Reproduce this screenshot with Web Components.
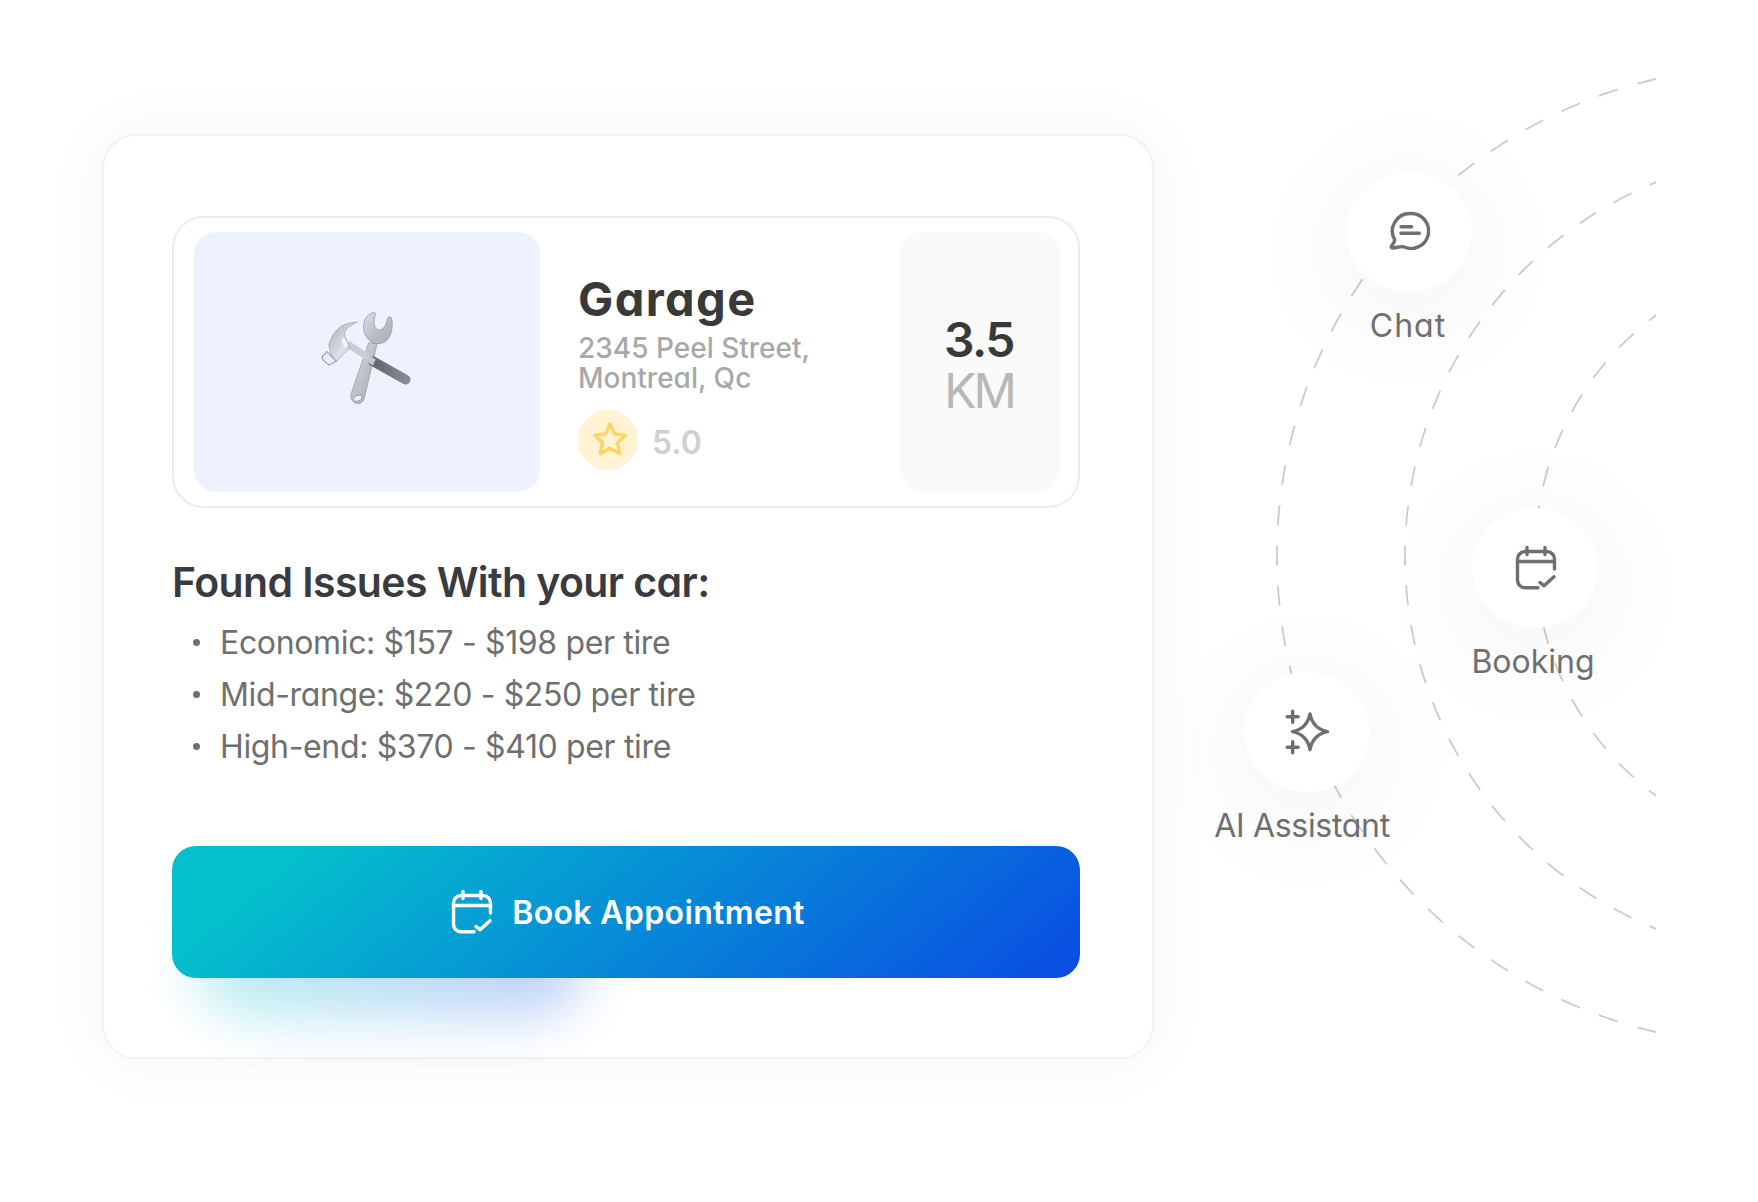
<!DOCTYPE html>
<html lang="en">
<head>
<meta charset="utf-8">
<title>Garage booking</title>
<style>
    html, body { margin: 0; background: #fff; }
    body {
        width: 1758px;
        height: 1202px;
        overflow: hidden;
        font-family: Inter, "Noto Sans", sans-serif;
        font-feature-settings: "cv11" 1;
        color: #393939;
    }
</style>
</head>
<body>
<booking-stage>
    <booking-card>
        <garage-summary distance="3.5" unit="KM" rating="5.0">
            <svg slot="picture" width="94" height="95" viewBox="125 95 275 280" aria-hidden="true">
                <defs>
                    <linearGradient id="steel" x1="0" y1="0" x2="1" y2="1">
                        <stop offset="0" stop-color="#dddee5"/>
                        <stop offset=".55" stop-color="#bcbec7"/>
                        <stop offset="1" stop-color="#a8aab3"/>
                    </linearGradient>
                    <linearGradient id="grip" x1="0" y1="0" x2="1" y2="0">
                        <stop offset="0" stop-color="#5f666e"/>
                        <stop offset="1" stop-color="#858b92"/>
                    </linearGradient>
                    <linearGradient id="head" x1="0" y1="0" x2="1" y2="1">
                        <stop offset="0" stop-color="#a9acb6"/>
                        <stop offset=".6" stop-color="#dfe1e7"/>
                        <stop offset="1" stop-color="#a9acb6"/>
                    </linearGradient>
                    <filter id="soft"><feGaussianBlur stdDeviation="1.300"/></filter>
                </defs>
                <g filter="url(#soft)">
                    <path fill="url(#steel)" stroke="#8e919b" stroke-width="2" d="M268 188 216 338c-8 26 26 44 38 16l38-162z"/>
                    <path fill="url(#steel)" stroke="#8e919b" stroke-width="2" d="M278 100c-23 8-30 35-23 60 10 25 30 35 50 30 25-5 37-40 30-75-5-5-10-3-13 3-2 22-17 37-27 32-13-5-15-25-7-45 0-5-4-6-10-5z"/>
                    <ellipse cx="235" cy="352" rx="13" ry="8" transform="rotate(-20 235 352)" fill="#eef2fe" stroke="#85888f" stroke-width="2"/>
                    <path d="M205 192 275 238" stroke="#c9ccd4" stroke-width="20"/>
                    <path d="M280 243 376 297" stroke="url(#grip)" stroke-width="29" stroke-linecap="round"/>
                    <path d="M270 224 260 244 280 256 288 238z" fill="#c2c5cd"/>
                    <path fill="url(#head)" stroke="#868993" stroke-width="1.500" d="M233 128c-38 0-71 20-83 67l6 27 16 23c13-13 25-30 40-40-7-25-22-40-12-55 10-10 22-16 33-22z"/>
                    <path fill="#f2f3f6" d="M190 172c8 4 14 14 16 26-6 5-12 4-14-2-3-8-5-16-2-24z"/>
                    <path fill="#e6edf8" stroke="#8f96a6" stroke-width="3" d="M145 215 132 228c-3 4-2 8 1 11l10 10c4 4 10 5 15 2l14-8z"/>
                </g>
            </svg>
            <span slot="name">Garage</span>
            <span slot="address">2345 Peel Street,<br>Montreal, Qc</span>
            <svg slot="star" width="38" height="36" viewBox="0 0 38 36" fill="none" stroke="#ffd466" stroke-width="3.400" stroke-linejoin="round" aria-hidden="true">
                <path d="M19 3l4.600 10 10.900 1.300-8 7.500 2.100 10.800L19 27.200 9.400 32.600l2.100-10.800-8-7.500L14.400 13z"/>
            </svg>
        </garage-summary>
        <issue-list title="Found Issues With your car:">
            <li>Economic: $157 - $198 per tire</li>
            <li>Mid-range: $220 - $250 per tire</li>
            <li>High-end: $370 - $410 per tire</li>
        </issue-list>
        <gradient-button>
            <svg slot="icon" width="48" height="48" viewBox="0 0 48 48" fill="none" stroke="#fff" stroke-width="3.400" stroke-linecap="round" stroke-linejoin="round" aria-hidden="true">
                <path d="M43.500 25V15a7.500 7.500 0 0 0-7.500-7.500H14a7.500 7.500 0 0 0-7.500 7.500v21.300a7.500 7.500 0 0 0 7.500 7.500h13M6.500 17.500h37M16 3.500v7M34 3.500v7M29 38.500l4 3.300 10-9"/>
            </svg>
            Book Appointment
        </gradient-button>
    </booking-card>
    <orbit-panel>
        <orbit-node label="Chat" style="left: 1346px; top: 172px; --label-shift: -1px; --label-spacing: 1px">
            <svg width="48" height="48" viewBox="0 0 48 48" fill="none" stroke="#6f6f6f" stroke-width="3.400" stroke-linecap="round" stroke-linejoin="round" aria-hidden="true">
                <path d="M26 5.500a17.500 17.500 0 1 1-7 33.500l-.8-.3c-3-.5-6.500 1-10.700 1.300-1.200 0-1.500-1-1-1.800 1.800-2.600 3-4 3.300-6.400A17.500 17.500 0 0 1 26 5.500z"/>
                <path d="M16 18.700h10.700M16 25.300h18.300"/>
            </svg>
        </orbit-node>
        <orbit-node label="Booking" style="left: 1472px; top: 508px; --label-shift: -2px">
            <svg width="48" height="48" viewBox="0 0 48 48" fill="none" stroke="#6f6f6f" stroke-width="3.400" stroke-linecap="round" stroke-linejoin="round" aria-hidden="true">
                <path d="M43.500 25V15a7.500 7.500 0 0 0-7.500-7.500H14a7.500 7.500 0 0 0-7.500 7.500v21.300a7.500 7.500 0 0 0 7.500 7.500h13M6.500 17.500h37M16 3.500v7M34 3.500v7M29 38.500l4 3.300 10-9"/>
            </svg>
        </orbit-node>
        <orbit-node label="AI Assistant" style="left: 1244px; top: 672px; --label-shift: -5px; --label-spacing: -0.3px">
            <svg width="48" height="48" viewBox="0 0 48 48" fill="none" stroke="#6f6f6f" stroke-width="3.400" stroke-linecap="round" stroke-linejoin="round" aria-hidden="true">
                <path d="M27 6Q30 20.700 44.500 23.700 30 26.700 27 41.500 24 26.700 9.500 23.700 24 20.700 27 6z"/>
                <path d="M4.200 8.700h11M9.700 3.200v11M4.200 39.300h11M9.700 33.800v11"/>
            </svg>
        </orbit-node>
    </orbit-panel>
</booking-stage>

<script>
class BookingStage extends HTMLElement {
    constructor() {
        super();
        this.attachShadow({ mode: 'open' });
        this.shadowRoot.innerHTML = `
            <style>
                :host {
                    display: flex;
                    align-items: flex-start;
                    padding: 134px 0 0 102px;
                }
            </style>
            <slot></slot>
        `;
    }
}

class BookingCard extends HTMLElement {
    constructor() {
        super();
        this.attachShadow({ mode: 'open' });
        this.shadowRoot.innerHTML = `
            <style>
                :host {
                    display: flex;
                    flex-direction: column;
                    box-sizing: border-box;
                    width: 1052px;
                    height: 925px;
                    padding: 80px 72px 0 68px;
                    background: #fff;
                    border: 2px solid #f1f2f3;
                    border-radius: 34px;
                    box-shadow: 0 0 70px rgba(40, 50, 60, 0.045);
                }
            </style>
            <slot></slot>
        `;
    }
}

class GarageSummary extends HTMLElement {
    constructor() {
        super();
        this.attachShadow({ mode: 'open' });
        this.shadowRoot.innerHTML = `
            <style>
                :host {
                    display: flex;
                    box-sizing: border-box;
                    height: 292px;
                    padding: 14px 18px 14px 20px;
                    border: 2px solid #ececec;
                    border-radius: 32px;
                }
                .picture {
                    flex: none;
                    display: flex;
                    align-items: center;
                    justify-content: center;
                    box-sizing: border-box;
                    width: 346px;
                    padding-bottom: 8px;
                    background: #edf2fe;
                    border-radius: 22px;
                }
                .info {
                    flex: 1;
                    padding: 39px 0 0 38px;
                }
                .name {
                    font-size: 47px;
                    font-weight: 700;
                    line-height: 56px;
                    letter-spacing: 1.4px;
                    color: #393939;
                }
                .address {
                    margin-top: 6px;
                    font-size: 28px;
                    font-weight: 500;
                    line-height: 30px;
                    color: #a8a8a8;
                }
                .rating {
                    display: flex;
                    align-items: center;
                    gap: 14px;
                    margin-top: 17px;
                    font-size: 32px;
                    font-weight: 600;
                    color: #d0d0d0;
                }
                .score { padding-top: 4px; }
                .badge {
                    display: flex;
                    align-items: center;
                    justify-content: center;
                    box-sizing: border-box;
                    width: 60px;
                    height: 60px;
                    padding: 0 0 3px 3px;
                    background: #fff3d4;
                    border-radius: 50%;
                }
                .distance {
                    flex: none;
                    display: flex;
                    flex-direction: column;
                    align-items: center;
                    justify-content: center;
                    width: 160px;
                    padding: 5px 2px 0 0;
                    box-sizing: border-box;
                    background: #fafafa;
                    border-radius: 22px;
                    font-size: 48px;
                    line-height: 51px;
                }
                .value { font-weight: 600; letter-spacing: -1.6px; color: #393939; }
                .unit { font-weight: 400; letter-spacing: -3px; color: #b8b8b8; }
            </style>
            <div class="picture"><slot name="picture"></slot></div>
            <div class="info">
                <div class="name"><slot name="name"></slot></div>
                <div class="address"><slot name="address"></slot></div>
                <div class="rating">
                    <span class="badge"><slot name="star"></slot></span>
                    <span class="score"></span>
                </div>
            </div>
            <div class="distance">
                <span class="value"></span>
                <span class="unit"></span>
            </div>
        `;
    }

    connectedCallback() {
        this.shadowRoot.querySelector(".score").textContent = this.getAttribute("rating");
        this.shadowRoot.querySelector(".value").textContent = this.getAttribute("distance");
        this.shadowRoot.querySelector(".unit").textContent = this.getAttribute("unit");
    }
}

class IssueList extends HTMLElement {
    constructor() {
        super();
        this.attachShadow({ mode: 'open' });
        this.shadowRoot.innerHTML = `
            <style>
                :host {
                    display: block;
                    margin-top: 48px;
                }
                h2 {
                    margin: 0 0 9px;
                    font-size: 41px;
                    font-weight: 600;
                    line-height: 52px;
                    letter-spacing: -0.6px;
                    color: #393b40;
                }
                ul {
                    margin: 0;
                    padding: 0 0 0 48px;
                    font-size: 32px;
                    line-height: 52px;
                    letter-spacing: -0.35px;
                    color: #6f6f6f;
                }
                ::slotted(li) {
                    list-style: none;
                }
                ::slotted(li)::before {
                    content: "";
                    display: inline-block;
                    width: 7px;
                    height: 7px;
                    margin: 0 20.5px 0 -27.5px;
                    vertical-align: 8px;
                    background: #6f6f6f;
                    border-radius: 50%;
                }
            </style>
            <h2></h2>
            <ul><slot></slot></ul>
        `;
    }

    connectedCallback() {
        this.shadowRoot.querySelector("h2").textContent = this.getAttribute("title");
    }
}

class GradientButton extends HTMLElement {
    constructor() {
        super();
        this.attachShadow({ mode: 'open' });
        this.shadowRoot.innerHTML = `
            <style>
                :host {
                    display: block;
                    position: relative;
                    margin-top: 73px;
                    height: 132px;
                }
                .glow {
                    position: absolute;
                    left: 22px;
                    top: 50px;
                    width: 392px;
                    height: 122px;
                    background: linear-gradient(90deg, #04c3cc, #0a4be3);
                    opacity: 0.26;
                    filter: blur(26px);
                    border-radius: 60px;
                }
                button {
                    position: relative;
                    display: flex;
                    align-items: center;
                    justify-content: center;
                    gap: 17px;
                    width: 100%;
                    height: 100%;
                    padding: 0;
                    border: 0;
                    border-radius: 24px;
                    background: linear-gradient(140deg, #04c0cc 12%, #0a4be3 100%);
                    font: inherit;
                    font-size: 32px;
                    font-weight: 600;
                    letter-spacing: 0.35px;
                    color: #fff;
                }
            </style>
            <div class="glow"></div>
            <button type="button"><slot name="icon"></slot><span><slot></slot></span></button>
        `;
    }
}

class OrbitPanel extends HTMLElement {
    constructor() {
        super();
        this.attachShadow({ mode: 'open' });
        this.shadowRoot.innerHTML = `
            <style>
                :host {
                    display: block;
                    position: absolute;
                    inset: 0;
                    pointer-events: none;
                }
                svg {
                    position: absolute;
                    left: 0;
                    top: 0;
                }
            </style>
            <svg width="1656" height="1202" viewBox="0 0 1656 1202" fill="none" stroke="#cbcbcb" stroke-width="1.800" aria-hidden="true"></svg>
            <slot></slot>
        `;
    }

    connectedCallback() {
        // each ring is two arcs from its leftmost point so the dashes mirror top and bottom
        const rings = [[1766, 489, 20.25], [1808, 403, 20], [1834, 299, 20]];
        const cy = 555.5;
        let paths = "";
        rings.forEach(function (ring) {
            const cx = ring[0], r = ring[1], dash = ring[2];
            const left = cx - r;
            const style = ' stroke-dasharray="' + dash + ' ' + dash + '" stroke-dashoffset="' + (dash / 2) + '"';
            paths += '<path' + style + ' d="M' + left + ' ' + cy + 'A' + r + ' ' + r + ' 0 0 1 ' + cx + ' ' + (cy - r) + '"/>';
            paths += '<path' + style + ' d="M' + left + ' ' + cy + 'A' + r + ' ' + r + ' 0 0 0 ' + cx + ' ' + (cy + r) + '"/>';
        });
        this.shadowRoot.querySelector("svg").innerHTML = paths;
    }
}

class OrbitNode extends HTMLElement {
    constructor() {
        super();
        this.attachShadow({ mode: 'open' });
        this.shadowRoot.innerHTML = `
            <style>
                :host {
                    display: flex;
                    flex-direction: column;
                    align-items: center;
                    position: absolute;
                    width: 126px;
                }
                .disc {
                    display: flex;
                    align-items: center;
                    justify-content: center;
                    width: 126px;
                    height: 120px;
                    background: #fff;
                    border-radius: 50%;
                    box-shadow: 0 18px 120px rgba(0, 0, 0, 0.07);
                }
                .label {
                    margin-top: 12px;
                    transform: translateX(var(--label-shift, 0));
                    font-size: 32px;
                    line-height: 44px;
                    letter-spacing: var(--label-spacing, 0);
                    white-space: nowrap;
                    color: #6f6f6f;
                }
            </style>
            <div class="disc"><slot></slot></div>
            <div class="label"></div>
        `;
    }

    connectedCallback() {
        this.shadowRoot.querySelector(".label").textContent = this.getAttribute("label");
    }
}

customElements.define("booking-stage", BookingStage);
customElements.define("booking-card", BookingCard);
customElements.define("garage-summary", GarageSummary);
customElements.define("issue-list", IssueList);
customElements.define("gradient-button", GradientButton);
customElements.define("orbit-panel", OrbitPanel);
customElements.define("orbit-node", OrbitNode);
</script>
</body>
</html>
